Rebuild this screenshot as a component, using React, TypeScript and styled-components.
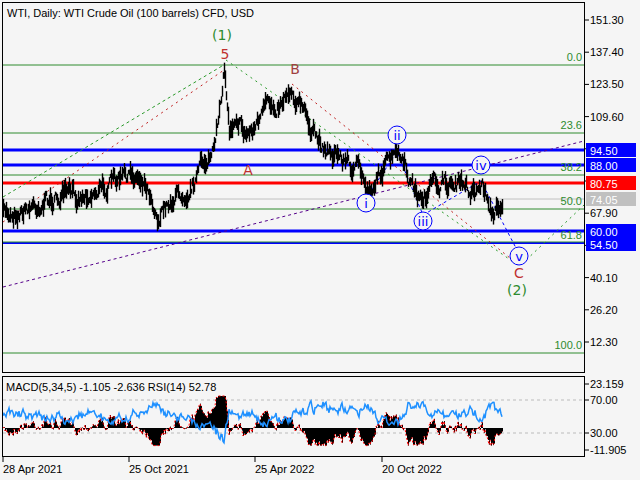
import React from "react";
import styled, { createGlobalStyle } from "styled-components";

const Global = createGlobalStyle`
  html, body { margin: 0; padding: 0; background: #f5f5f5; }
  body { font-family: "Liberation Sans", "DejaVu Sans", sans-serif; }
`;

const Root = styled.div`
  width: 640px; height: 480px; background: #f5f5f5; padding: 2px 0 0 2px; box-sizing: border-box;
  display: flex; flex-direction: column; overflow: hidden;
`;
const Row = styled.div`display: flex; align-items: stretch;`;
const Panel = styled.div<{ $h: number }>`
  width: 583px; height: ${(p) => p.$h}px; border: 1px solid #000; box-sizing: border-box; position: relative;
  svg { display: block; }
`;
const Gap = styled.div`height: 3px;`;
const Axis = styled.svg`display: block;`;

let seed = 7;
const rnd = () => { seed = (seed * 16807) % 2147483647; return seed / 2147483647; };

const keys: [number, number][] = [
  [3, 214], [20, 210], [40, 203], [60, 198], [80, 195], [100, 188], [125, 178], [140, 175], [150, 190], [158, 218],
  [170, 200], [190, 185], [205, 160], [215, 150], [220, 100], [224, 68], [229, 130], [236, 110], [245, 135],
  [255, 125], [265, 110], [280, 100], [290, 85], [300, 105], [315, 140], [330, 150], [345, 160], [358, 170],
  [368, 192], [380, 170], [398, 155], [408, 180], [420, 200], [435, 185], [455, 183], [470, 190], [482, 185],
  [490, 205], [493, 218], [498, 205], [502, 200],
];
const interp = (x: number) => {
  for (let i = 0; i < keys.length - 1; i++) {
    const [x0, y0] = keys[i], [x1, y1] = keys[i + 1];
    if (x >= x0 && x <= x1) return y0 + ((y1 - y0) * (x - x0)) / (x1 - x0);
  }
  return keys[keys.length - 1][1];
};
const bars: { x: number; lo: number; hi: number; c: number }[] = [];
let walk = 0;
for (let x = 3; x <= 502; x++) {
  walk = walk * 0.7 + (rnd() - 0.5) * 12;
  const c = interp(x) + walk;
  const r = 2 + rnd() * 8;
  bars.push({ x, lo: c + r, hi: c - r, c });
}
const macd: { x: number; h: number; r: number }[] = [];
let ma = bars[0].c, rs = 0;
for (const b of bars) {
  ma = ma * 0.93 + b.c * 0.07;
  rs = rs * 0.6 + (rnd() - 0.5) * 7;
  macd.push({ x: b.x, h: Math.max(-22, Math.min(40, (ma - b.c) * 1.1)), r: 414 + (ma - b.c) * 0.45 + rs });
}
const rsiPath = macd.map((m, i) => `${i ? "L" : "M"}${m.x},${Math.max(380, Math.min(448, m.r)).toFixed(1)}`).join(" ");

const G = "#2e8b2e";
const hl = [
  { y: 65, c: G, w: 1 }, { y: 133, c: G, w: 1 }, { y: 150, c: "#0000ff", w: 3 }, { y: 165, c: "#0000ff", w: 3 },
  { y: 175, c: G, w: 1 }, { y: 183, c: "#ff0000", w: 3 }, { y: 199, c: "#c0c0c0", w: 1 }, { y: 209, c: G, w: 1 },
  { y: 231, c: "#0000ff", w: 3 }, { y: 243, c: "#0000ff", w: 2 }, { y: 242, c: G, w: 1 }, { y: 353, c: G, w: 1 },
];
const fib = [["0.0", 61], ["23.6", 129], ["38.2", 171], ["50.0", 205], ["61.8", 239], ["100.0", 349]] as const;
const circ = [["ii", 397, 135], ["iv", 481, 165], ["i", 366, 203], ["iii", 423, 221], ["v", 519, 256]] as const;
const txt = { fontSize: 11, fontFamily: "'Liberation Sans', sans-serif" } as const;

const ticks = ["151.30", "137.40", "123.50", "109.60", "", "", "67.90", "", "40.10", "26.20", "12.30"];
const boxes = [["94.50", 150, "#0000ff"], ["88.00", 165, "#0000ff"], ["80.75", 183, "#ff0000"], ["74.05", 199, "#c0c0c0"], ["60.00", 231, "#0000ff"], ["54.50", 244, "#0000ff"]] as const;

export default function App() {
  return (
    <Root>
      <Global />
      <Row>
        <Panel $h={371}>
          <svg width={581} height={369} viewBox="3 3 581 369">
            {hl.map((l, i) => <line key={i} x1={3} x2={584} y1={l.y} y2={l.y} stroke={l.c} strokeWidth={l.w} />)}
            <line x1={3} y1={287} x2={584} y2={141} stroke="#55008b" strokeDasharray="3 3" />
            <line x1={3} y1={197} x2={222} y2={66} stroke="#2a9a2a" strokeDasharray="3 3" />
            <line x1={3} y1={222} x2={224} y2={70} stroke="#c02020" strokeDasharray="2 4" />
            <line x1={226} y1={60} x2={519} y2={266} stroke="#2a9a2a" strokeDasharray="2 4" />
            <line x1={292} y1={84} x2={515} y2={262} stroke="#c02020" strokeDasharray="2 4" />
            <line x1={522} y1={264} x2={584} y2={205} stroke="#2a9a2a" strokeDasharray="2 4" />
            <polyline points="368,195 397,152 423,215 481,181 516,248" fill="none" stroke="#0000ff" strokeDasharray="3 3" />
            {bars.map((b) => <line key={b.x} x1={b.x + 0.5} x2={b.x + 0.5} y1={b.hi} y2={b.lo} stroke="#000" strokeWidth={1.4} />)}
            <text x={7} y={17} {...txt} fill="#000">WTI, Daily:  WTI Crude Oil (100 barrels) CFD, USD</text>
            {fib.map(([t, y]) => <text key={t} x={582} y={y} {...txt} fill={G} textAnchor="end">{t}</text>)}
            <text x={222} y={40} fontSize={14} fontFamily="'DejaVu Sans', sans-serif" fill={G} textAnchor="middle">(1)</text>
            <text x={225} y={59} fontSize={14} fontFamily="'DejaVu Sans', sans-serif" fill="#c03030" textAnchor="middle">5</text>
            <text x={295} y={74} fontSize={14} fontFamily="'DejaVu Sans', sans-serif" fill="#a04040" textAnchor="middle">B</text>
            <text x={248} y={175} fontSize={14} fontFamily="'DejaVu Sans', sans-serif" fill="#c03030" textAnchor="middle">A</text>
            <text x={519} y={278} fontSize={14} fontFamily="'DejaVu Sans', sans-serif" fill="#c03030" textAnchor="middle">C</text>
            <text x={517} y={295} fontSize={14} fontFamily="'DejaVu Sans', sans-serif" fill={G} textAnchor="middle">(2)</text>
            {circ.map(([t, x, y]) => (
              <g key={t}>
                <circle cx={x} cy={y} r={9} fill="#f5f5f5" stroke="#0000ff" />
                <text x={x} y={y + 5} fontSize={13} fontFamily="'DejaVu Sans', sans-serif" fill="#0000ff" textAnchor="middle">{t}</text>
              </g>
            ))}
          </svg>
        </Panel>
        <Axis width={55} height={371} viewBox="585 2 55 371">
          {ticks.map((t, i) => {
            const y = 20 + i * 32.2;
            return (
              <g key={i}>
                <line x1={585} x2={589} y1={y} y2={y} stroke="#000" />
                {t && <text x={590} y={y + 4} {...txt} fill="#000">{t}</text>}
              </g>
            );
          })}
          {boxes.map(([t, y, c]) => (
            <g key={t}>
              <rect x={586} y={y - 7} width={50} height={14} fill={c} />
              <text x={590} y={y + 5} {...txt} fill="#fff">{t}</text>
            </g>
          ))}
        </Axis>
      </Row>
      <Gap />
      <Row>
        <Panel $h={81}>
          <svg width={581} height={79} viewBox="3 376 581 79">
            <line x1={3} x2={584} y1={399} y2={399} stroke="#bbb" strokeDasharray="3 3" />
            <line x1={3} x2={584} y1={432} y2={432} stroke="#bbb" strokeDasharray="3 3" />
            {macd.map((m) => <line key={m.x} x1={m.x + 0.5} x2={m.x + 0.5} y1={427} y2={427 - m.h * 0.8} stroke="#000" />)}
            <polyline points={macd.map((m) => `${m.x},${(427 - m.h * 0.8).toFixed(1)}`).join(" ")} fill="none" stroke="#ff0000" strokeDasharray="2 2" />
            <path d={rsiPath} fill="none" stroke="#1e90ff" strokeWidth={1.5} />
            <text x={6} y={390} {...txt} fill="#000">MACD(5,34,5) -1.105 -2.636 RSI(14) 52.78</text>
          </svg>
        </Panel>
        <Axis width={55} height={81} viewBox="585 375 55 81">
          {[["23.159", 383], ["70.00", 399], ["30.00", 432], ["-11.905", 449]].map(([t, y]) => (
            <g key={t}>
              <line x1={585} x2={589} y1={+y} y2={+y} stroke="#000" />
              <text x={590} y={+y + 4} {...txt} fill="#000">{t}</text>
            </g>
          ))}
        </Axis>
      </Row>
      <svg width={638} height={22} viewBox="2 456 638 22" style={{ display: "block" }}>
        {[["28 Apr 2021", 3], ["25 Oct 2021", 129], ["25 Apr 2022", 255], ["20 Oct 2022", 382]].map(([t, x]) => (
          <g key={t}>
            <line x1={+x} x2={+x} y1={456} y2={461} stroke="#000" />
            <text x={+x} y={472} {...txt} fill="#000">{t}</text>
          </g>
        ))}
      </svg>
    </Root>
  );
}
